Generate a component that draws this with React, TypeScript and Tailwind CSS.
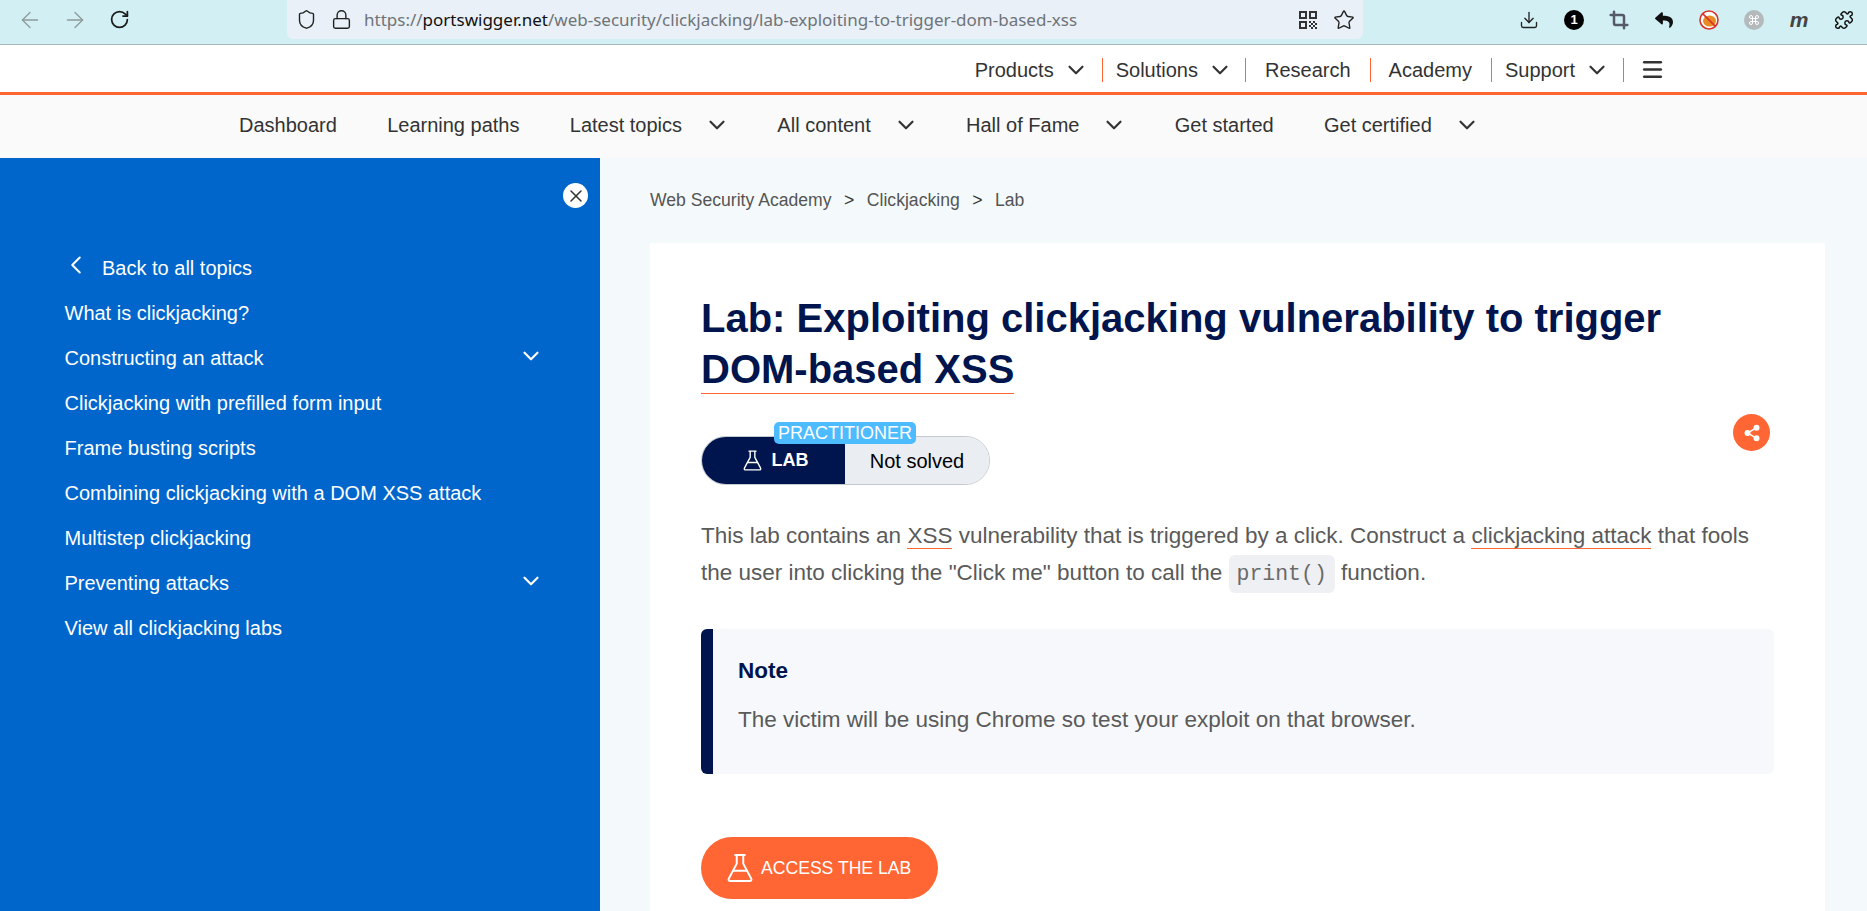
import { ChevronDown, ChevronLeft, X, Share2, Shield, Lock, Star, Download, Crop, ArrowLeft, ArrowRight, RotateCw, Puzzle, Command, Menu } from 'lucide-react';
import { FaReply } from 'react-icons/fa';

const sans = 'font-["Liberation_Sans",Arial,sans-serif]';

function Flask({ className }: { className?: string }) {
  return (
    <svg viewBox="0 0 24 27" fill="none" stroke="currentColor" strokeWidth="1.8" strokeLinejoin="round" strokeLinecap="round" className={className}>
      <path d="M7.5 1.5h9M9 1.5v8L1.6 23.4a1.4 1.4 0 0 0 1.3 2.1h18.2a1.4 1.4 0 0 0 1.3-2.1L15 9.5v-8" />
      <path d="M5.5 16h13" />
    </svg>
  );
}

function QrIcon() {
  return (
    <svg viewBox="0 0 18 18" className="h-[18px] w-[18px]" fill="#333">
      <path d="M0 0h8v8H0zM2 2v4h4V2zM10 0h8v8h-8zM12 2v4h4V2zM0 10h8v8H0zM2 12v4h4v-4z" fillRule="evenodd" />
      <path d="M10 10h2v2h-2zM14 10h2v2h-2zM12 12h2v2h-2zM16 12h2v2h-2zM10 14h2v2h-2zM14 14h2v2h-2zM12 16h2v2h-2zM16 16h2v2h-2z" />
    </svg>
  );
}

function BlockedPumpkin() {
  return (
    <svg viewBox="0 0 20 20" className="h-[20px] w-[20px]">
      <circle cx="10" cy="10" r="9" fill="#fff" stroke="#d8322a" strokeWidth="1.6" />
      <ellipse cx="10.5" cy="11" rx="6.5" ry="5.5" fill="#e98b22" />
      <path d="M3.6 3.6l12.8 12.8" stroke="#d8322a" strokeWidth="1.6" />
    </svg>
  );
}

function BrowserBar() {
  return (
    <div className="flex h-[45px] items-start border-b border-[#a9b8ba] bg-[#d2eff3] pl-[17px]">
      <div className="flex h-[39px] items-center gap-[19px]">
        <ArrowLeft className="h-[26px] w-[26px] text-[#8f9a9c]" strokeWidth={1.2} />
        <ArrowRight className="h-[26px] w-[26px] text-[#8f9a9c]" strokeWidth={1.2} />
        <RotateCw className="ml-[2px] h-[21px] w-[21px] text-[#1b1b1b]" strokeWidth={2} />
      </div>
      <div className="ml-[157px] flex h-[39px] w-[1076px] items-center rounded-b-md bg-[#e9f0f7] pl-[9px] pr-[8px]">
        <Shield className="h-[21px] w-[21px] text-[#222]" strokeWidth={1.6} />
        <Lock className="ml-[14px] h-[21px] w-[21px] text-[#222]" strokeWidth={1.6} />
        <span className='ml-[12px] font-["Noto_Sans",sans-serif] text-[17px] text-[#6f7478]'>
          https://<span className="text-[#111]">portswigger.net</span>/web-security/clickjacking/lab-exploiting-to-trigger-dom-based-xss
        </span>
        <div className="ml-auto flex items-center gap-[16px]">
          <QrIcon />
          <Star className="h-[22px] w-[22px] text-[#222]" strokeWidth={1.5} />
        </div>
      </div>
      <div className="ml-[156px] flex h-[39px] items-center gap-[25px]">
        <Download className="h-[20px] w-[20px] text-[#222]" strokeWidth={1.6} />
        <span className={`flex h-[20px] w-[20px] items-center justify-center rounded-full bg-black text-[13px] font-bold text-white ${sans}`}>1</span>
        <Crop className="h-[20px] w-[20px] text-[#55596a]" strokeWidth={3} />
        <FaReply className="h-[18px] w-[20px] text-[#111]" />
        <BlockedPumpkin />
        <span className="flex h-[20px] w-[20px] items-center justify-center rounded-full bg-[#b4b9bc]">
          <Command className="h-[12px] w-[12px] text-white" strokeWidth={2} />
        </span>
        <span className={`w-[20px] text-center text-[21px] font-bold italic leading-none text-[#444] ${sans}`}>m</span>
        <Puzzle className="h-[20px] w-[20px] text-[#111]" strokeWidth={1.8} />
      </div>
    </div>
  );
}

const topItems = [
  { label: 'Products', chevron: true, cls: 'pr-[13px]' },
  { label: 'Solutions', chevron: true, cls: 'pl-[13px] pr-[12px]' },
  { label: 'Research', cls: 'pl-[19px] pr-[19px]' },
  { label: 'Academy', cls: 'pl-[18px] pr-[19px]' },
  { label: 'Support', chevron: true, cls: 'pl-[13px] pr-[13px]' },
];

function TopNav() {
  return (
    <div className="flex h-[47px] items-center justify-end bg-white pr-[202px] pt-[2px]">
      {topItems.map((item) => (
        <div key={item.label} className={`flex h-[24px] items-center border-r border-[#ff6633] text-[20px] text-[#333] ${item.cls}`}>
          {item.label}
          {item.chevron && <ChevronDown className="ml-[9px] h-[26px] w-[26px] text-[#333]" strokeWidth={2} />}
        </div>
      ))}
      <Menu className="ml-[16px] h-[25px] w-[25px] text-[#333]" strokeWidth={2.4} />
    </div>
  );
}

const subItems = [
  { label: 'Dashboard' },
  { label: 'Learning paths' },
  { label: 'Latest topics', chevron: true },
  { label: 'All content', chevron: true },
  { label: 'Hall of Fame', chevron: true },
  { label: 'Get started' },
  { label: 'Get certified', chevron: true },
];

function SubNav() {
  return (
    <div className="flex h-[66px] items-center gap-[50.3px] border-t-[3px] border-[#ff6633] bg-[#fafafa] pb-[4px] pl-[239px] text-[20px] text-[#333]">
      {subItems.map((item) => (
        <div key={item.label} className="flex items-center">
          {item.label}
          {item.chevron && <ChevronDown className="-mr-[3px] ml-[22px] h-[26px] w-[26px]" strokeWidth={2} />}
        </div>
      ))}
    </div>
  );
}

const sideItems = [
  { label: 'What is clickjacking?' },
  { label: 'Constructing an attack', chevron: true },
  { label: 'Clickjacking with prefilled form input' },
  { label: 'Frame busting scripts' },
  { label: 'Combining clickjacking with a DOM XSS attack' },
  { label: 'Multistep clickjacking' },
  { label: 'Preventing attacks', chevron: true },
  { label: 'View all clickjacking labs' },
];

function Sidebar() {
  return (
    <aside className="w-[600px] shrink-0 bg-[#0066cc] text-[20px] text-white">
      <div className="flex justify-end pr-[12px] pt-[25px]">
        <span className="flex h-[25px] w-[25px] items-center justify-center rounded-full bg-white">
          <X className="h-[20px] w-[20px] text-[#333]" strokeWidth={1.8} />
        </span>
      </div>
      <div className="pl-[64.5px] pr-[56px] pt-[37px]">
        <div className="flex h-[45px] items-center">
          <ChevronLeft className="-ml-[3.5px] mr-[11px] h-[30px] w-[30px] -translate-y-[3px]" strokeWidth={1.6} />
          Back to all topics
        </div>
        {sideItems.map((item) => (
          <div key={item.label} className="flex h-[45px] items-center justify-between">
            {item.label}
            {item.chevron && <ChevronDown className="h-[26px] w-[26px] -translate-y-[2px]" strokeWidth={2} />}
          </div>
        ))}
      </div>
    </aside>
  );
}

function Link({ children }: { children: React.ReactNode }) {
  return <span className="border-b border-[#ff6633]">{children}</span>;
}

function Content() {
  return (
    <main className="flex-1 bg-[#f4fafb] pl-[50px] pr-[42px]">
      <div className="flex h-[85px] items-center gap-[12.5px] pb-[1px] text-[17.6px] text-[#555]">
        <span>Web Security Academy</span>
        <span className="text-[#333]">&gt;</span>
        <span>Clickjacking</span>
        <span className="text-[#333]">&gt;</span>
        <span>Lab</span>
      </div>
      <div className="relative bg-white px-[51px] pb-[40px] pt-[50px]">
        <h1 className="text-[40px] font-bold leading-[51px] text-[#00144d]">
          Lab: Exploiting clickjacking vulnerability to trigger<br />
          <span className="inline-block border-b border-[#ff6633] leading-[48px]">DOM-based XSS</span>
        </h1>
        <span className="absolute right-[55px] top-[171px] flex h-[37px] w-[37px] items-center justify-center rounded-full bg-[#ff6633]">
          <Share2 className="h-[18px] w-[18px] text-white" fill="white" />
        </span>
        <div className="relative mt-[41px] flex h-[49px] w-[289px] overflow-hidden rounded-full border border-[#c4c9cd]">
          <div className="flex w-[143px] items-center justify-center gap-[10px] bg-[#00144d] pl-[4px] text-[18px] font-bold text-white">
            <Flask className="h-[21px] w-[19px]" />
            LAB
          </div>
          <div className="flex flex-1 items-center justify-center bg-[#eaeef2] text-[20px] text-black">Not solved</div>
        </div>
        <span className="absolute left-[124px] top-[179px] rounded-[5px] bg-[#4dbbff] px-[4px] text-[18px] leading-[22px] text-white">PRACTITIONER</span>
        <p className="mt-[32px] text-[22.5px] leading-[37px] text-[#5a5a5a]">
          This lab contains an <Link>XSS</Link> vulnerability that is triggered by a click. Construct a <Link>clickjacking attack</Link> that fools<br />
          the user into clicking the "Click me" button to call the{' '}
          <code className='rounded-md bg-[#eef0f3] px-[8px] py-[7px] font-["Liberation_Mono",monospace] text-[21.5px] text-[#6a6a6a]'>print()</code> function.
        </p>
        <div className="mt-[36px] h-[145px] rounded-md border-l-[12px] border-[#00144d] bg-[#f6f8fc] pl-[25px] pt-[29px] text-[22.5px]">
          <h4 className="font-bold leading-[26px] text-[#00144d]">Note</h4>
          <p className="mt-[23px] leading-[26px] text-[#5a5a5a]">The victim will be using Chrome so test your exploit on that browser.</p>
        </div>
        <div className="mt-[63px] flex h-[62px] w-[237px] items-center rounded-full bg-[#ff6633] pl-[26px] text-[17.6px] text-white">
          <Flask className="h-[30px] w-[26px]" />
          <span className="ml-[8px]">ACCESS THE LAB</span>
        </div>
      </div>
    </main>
  );
}

export default function App() {
  return (
    <div className={`flex h-[911px] flex-col overflow-hidden ${sans}`}>
      <BrowserBar />
      <TopNav />
      <SubNav />
      <div className="flex flex-1 overflow-hidden">
        <Sidebar />
        <Content />
      </div>
    </div>
  );
}
